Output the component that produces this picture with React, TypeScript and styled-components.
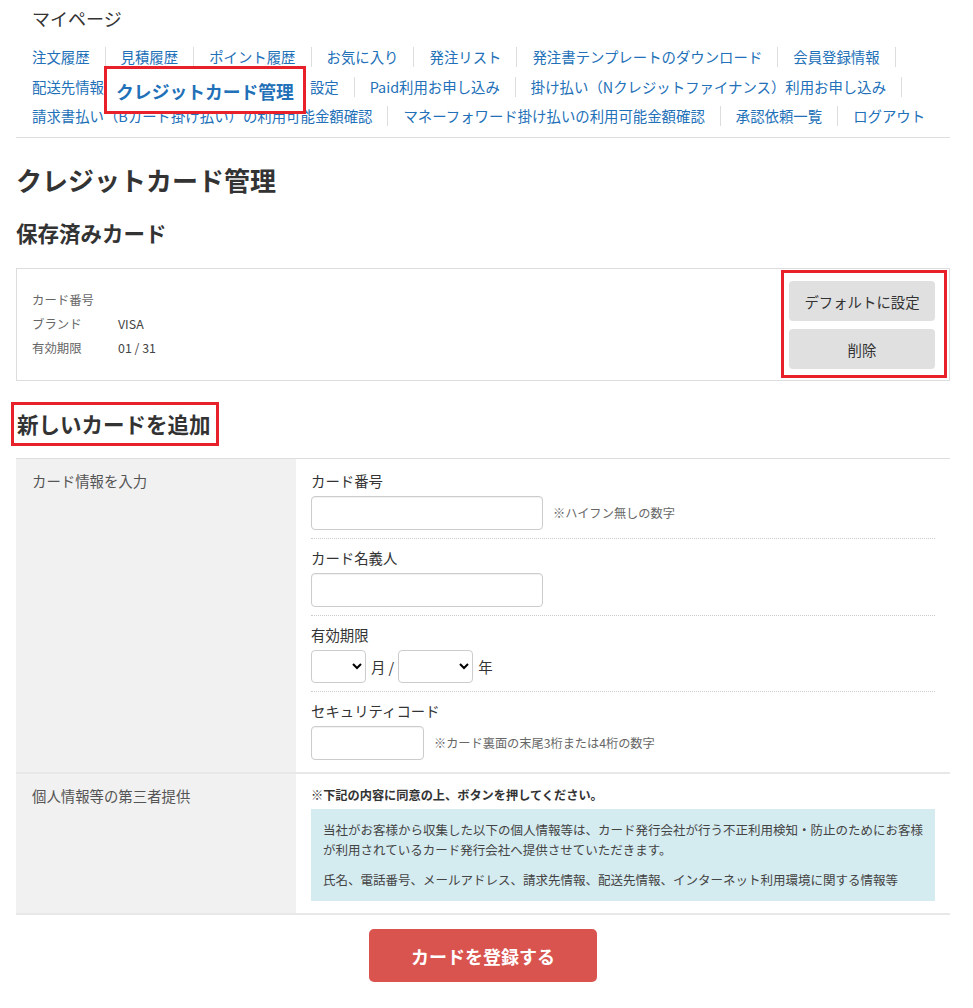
import React from "react";
import styled, { createGlobalStyle } from "styled-components";

const GlobalStyle = createGlobalStyle`
  html, body {
    margin: 0;
    padding: 0;
    background: #fff;
  }
  body {
    font-family: "Noto Sans CJK JP", "Noto Sans", sans-serif;
    color: #333;
  }
  * {
    box-sizing: border-box;
  }
`;

const Page = styled.div`
  width: 934px;
  margin-left: 16px;
  padding-top: 4px;
  padding-bottom: 26px;
`;

const MyPageTitle = styled.div`
  font-size: 18px;
  line-height: 28px;
  padding-left: 16px;
  color: #333;
`;

const Nav = styled.nav`
  position: relative;
  margin-top: 15px;
  padding-bottom: 11px;
  border-bottom: 1px solid #ddd;
`;

const NavRow = styled.ul`
  display: flex;
  list-style: none;
  margin: 0;
  padding: 0 0 0 16px;
  & + & {
    margin-top: 9.5px;
  }
`;

const NavItem = styled.li<{ $last?: boolean }>`
  height: 20px;
  line-height: 20px;
  padding: 0 15px;
  font-size: 14.4px;
  white-space: nowrap;
  border-right: 1px solid #ddd;
  &:first-child {
    padding-left: 0;
  }
  &:last-child {
    border-right: ${({ $last }) => ($last ? "none" : "1px solid #ddd")};
  }
`;

const NavLink = styled.a`
  color: #2270b8;
  text-decoration: none;
`;

/* enlarged copy of the current page's link, laid over the menu */
const Callout = styled.div`
  position: absolute;
  left: 88px;
  top: 19px;
  width: 202px;
  height: 48px;
  border: 3px solid #e8202a;
  background: #fff;
  display: flex;
  align-items: center;
  justify-content: center;
  color: #2270b8;
  font-weight: 700;
  font-size: 17.8px;
  padding-top: 1px;
`;

const PageTitle = styled.h1`
  margin: 23px 0 0;
  font-size: 26px;
  line-height: 38px;
  font-weight: 700;
  color: #333;
`;

const SectionTitle = styled.h2`
  margin: 18px 0 0;
  font-size: 21.5px;
  line-height: 32px;
  font-weight: 700;
  color: #333;
`;

const Marked = styled.div`
  display: inline-block;
  margin: 21px 0 0 -5px;
  padding: 3px 5px 3px 3px;
  border: 3px solid #e8202a;
  & > h2 {
    margin: 0;
  }
`;

const CardBox = styled.div`
  margin-top: 19px;
  border: 1px solid #ddd;
  display: flex;
  align-items: center;
  justify-content: space-between;
  padding: 1px 2px 2px 15px;
`;

const CardInfo = styled.dl`
  margin: 0;
  display: grid;
  grid-template-columns: 86px auto;
  grid-auto-rows: 24px;
  align-items: center;
  font-size: 12.4px;
`;

const CardLabel = styled.dt`
  color: #666;
`;

const CardValue = styled.dd`
  margin: 0;
  color: #444;
`;

const ActionFrame = styled.div`
  display: flex;
  flex-direction: column;
  gap: 8px;
  border: 3px solid #e8202a;
  padding: 8px 9px 6px 5px;
`;

const GreyButton = styled.button`
  width: 146px;
  height: 40px;
  border: none;
  border-radius: 4px;
  background: #e0e0e0;
  color: #333;
  font-family: inherit;
  font-size: 14.4px;
  cursor: pointer;
`;

const FormTable = styled.div`
  margin-top: 12px;
  border-top: 1px solid #ddd;
`;

const FormRow = styled.div`
  display: grid;
  grid-template-columns: 280px 1fr;
  border-bottom: 2px solid #e8e8e8;
`;

const RowHead = styled.div`
  background: #f1f1f1;
  padding: 11px 16px;
  font-size: 14.4px;
  line-height: 21px;
  color: #555;
`;

const RowBody = styled.div`
  padding: 11px 15px 12px 15px;
`;

const Field = styled.div`
  padding: 8px 0;
  border-bottom: 1px dotted #ccc;
  &:first-child {
    padding-top: 0;
  }
  &:last-child {
    border-bottom: none;
    padding-bottom: 0;
  }
`;

const FieldLabel = styled.div`
  font-size: 14.4px;
  line-height: 21px;
  color: #333;
  margin-bottom: 5px;
`;

const FieldLine = styled.div`
  display: flex;
  align-items: center;
`;

const TextInput = styled.input<{ $w: number }>`
  width: ${({ $w }) => $w}px;
  height: 34px;
  border: 1px solid #ccc;
  border-radius: 4px;
  box-shadow: inset 0 1px 1px rgba(0, 0, 0, 0.06);
  padding: 0 8px;
  font-family: inherit;
`;

const Select = styled.select<{ $w: number }>`
  width: ${({ $w }) => $w}px;
  height: 33px;
  border: 1px solid #ccc;
  border-radius: 4px;
  background: #fff;
  font-family: inherit;
  padding: 0 4px;
`;

const Unit = styled.span`
  font-size: 14.4px;
  color: #333;
  margin: 0 4px 0 5px;
`;

const Hint = styled.span`
  margin-left: 10px;
  font-size: 12.2px;
  color: #666;
`;

const Notice = styled.div`
  font-size: 12.2px;
  line-height: 21px;
  font-weight: 700;
  color: #333;
`;

const InfoBox = styled.div`
  margin-top: 3px;
  background: #d4ebf0;
  padding: 11px 6px 11px 12px;
  font-size: 12.5px;
  line-height: 20px;
  color: #444;
  & p {
    margin: 0;
  }
  & p + p {
    margin-top: 10px;
  }
`;

const SubmitWrap = styled.div`
  display: flex;
  padding-left: 353px;
  margin-top: 14px;
`;

const SubmitButton = styled.button`
  width: 228px;
  height: 53px;
  border: none;
  border-radius: 5px;
  background: #d9534f;
  color: #fff;
  font-family: inherit;
  font-size: 18px;
  font-weight: 700;
  cursor: pointer;
`;

const navRows: string[][] = [
  ["注文履歴", "見積履歴", "ポイント履歴", "お気に入り", "発注リスト", "発注書テンプレートのダウンロード", "会員登録情報"],
  ["配送先情報", "クレジットカード管理", "設定", "Paid利用お申し込み", "掛け払い（Nクレジットファイナンス）利用お申し込み"],
  ["請求書払い（Bカード掛け払い）の利用可能金額確認", "マネーフォワード掛け払いの利用可能金額確認", "承認依頼一覧", "ログアウト"],
];

export default function App() {
  return (
    <>
      <GlobalStyle />
      <Page>
        <MyPageTitle>マイページ</MyPageTitle>
        <Nav>
          {navRows.map((row, i) => (
            <NavRow key={i}>
              {row.map((label) => (
                <NavItem key={label} $last={i === 2}>
                  <NavLink href="#">{label}</NavLink>
                </NavItem>
              ))}
            </NavRow>
          ))}
          <Callout>クレジットカード管理</Callout>
        </Nav>

        <PageTitle>クレジットカード管理</PageTitle>
        <SectionTitle>保存済みカード</SectionTitle>

        <CardBox>
          <CardInfo>
            <CardLabel>カード番号</CardLabel>
            <CardValue />
            <CardLabel>ブランド</CardLabel>
            <CardValue>VISA</CardValue>
            <CardLabel>有効期限</CardLabel>
            <CardValue>01 / 31</CardValue>
          </CardInfo>
          <ActionFrame>
            <GreyButton>デフォルトに設定</GreyButton>
            <GreyButton>削除</GreyButton>
          </ActionFrame>
        </CardBox>

        <Marked>
          <SectionTitle>新しいカードを追加</SectionTitle>
        </Marked>

        <FormTable>
          <FormRow>
            <RowHead>カード情報を入力</RowHead>
            <RowBody>
              <Field>
                <FieldLabel>カード番号</FieldLabel>
                <FieldLine>
                  <TextInput $w={232} />
                  <Hint>※ハイフン無しの数字</Hint>
                </FieldLine>
              </Field>
              <Field>
                <FieldLabel>カード名義人</FieldLabel>
                <FieldLine>
                  <TextInput $w={232} />
                </FieldLine>
              </Field>
              <Field>
                <FieldLabel>有効期限</FieldLabel>
                <FieldLine>
                  <Select $w={55}>
                    <option></option>
                  </Select>
                  <Unit>月 /</Unit>
                  <Select $w={75}>
                    <option></option>
                  </Select>
                  <Unit>年</Unit>
                </FieldLine>
              </Field>
              <Field>
                <FieldLabel>セキュリティコード</FieldLabel>
                <FieldLine>
                  <TextInput $w={113} />
                  <Hint>※カード裏面の末尾3桁または4桁の数字</Hint>
                </FieldLine>
              </Field>
            </RowBody>
          </FormRow>
          <FormRow>
            <RowHead>個人情報等の第三者提供</RowHead>
            <RowBody>
              <Notice>※下記の内容に同意の上、ボタンを押してください。</Notice>
              <InfoBox>
                <p>
                  当社がお客様から収集した以下の個人情報等は、カード発行会社が行う不正利用検知・防止のためにお客様が利用されているカード発行会社へ提供させていただきます。
                </p>
                <p>氏名、電話番号、メールアドレス、請求先情報、配送先情報、インターネット利用環境に関する情報等</p>
              </InfoBox>
            </RowBody>
          </FormRow>
        </FormTable>

        <SubmitWrap>
          <SubmitButton>カードを登録する</SubmitButton>
        </SubmitWrap>
      </Page>
    </>
  );
}
